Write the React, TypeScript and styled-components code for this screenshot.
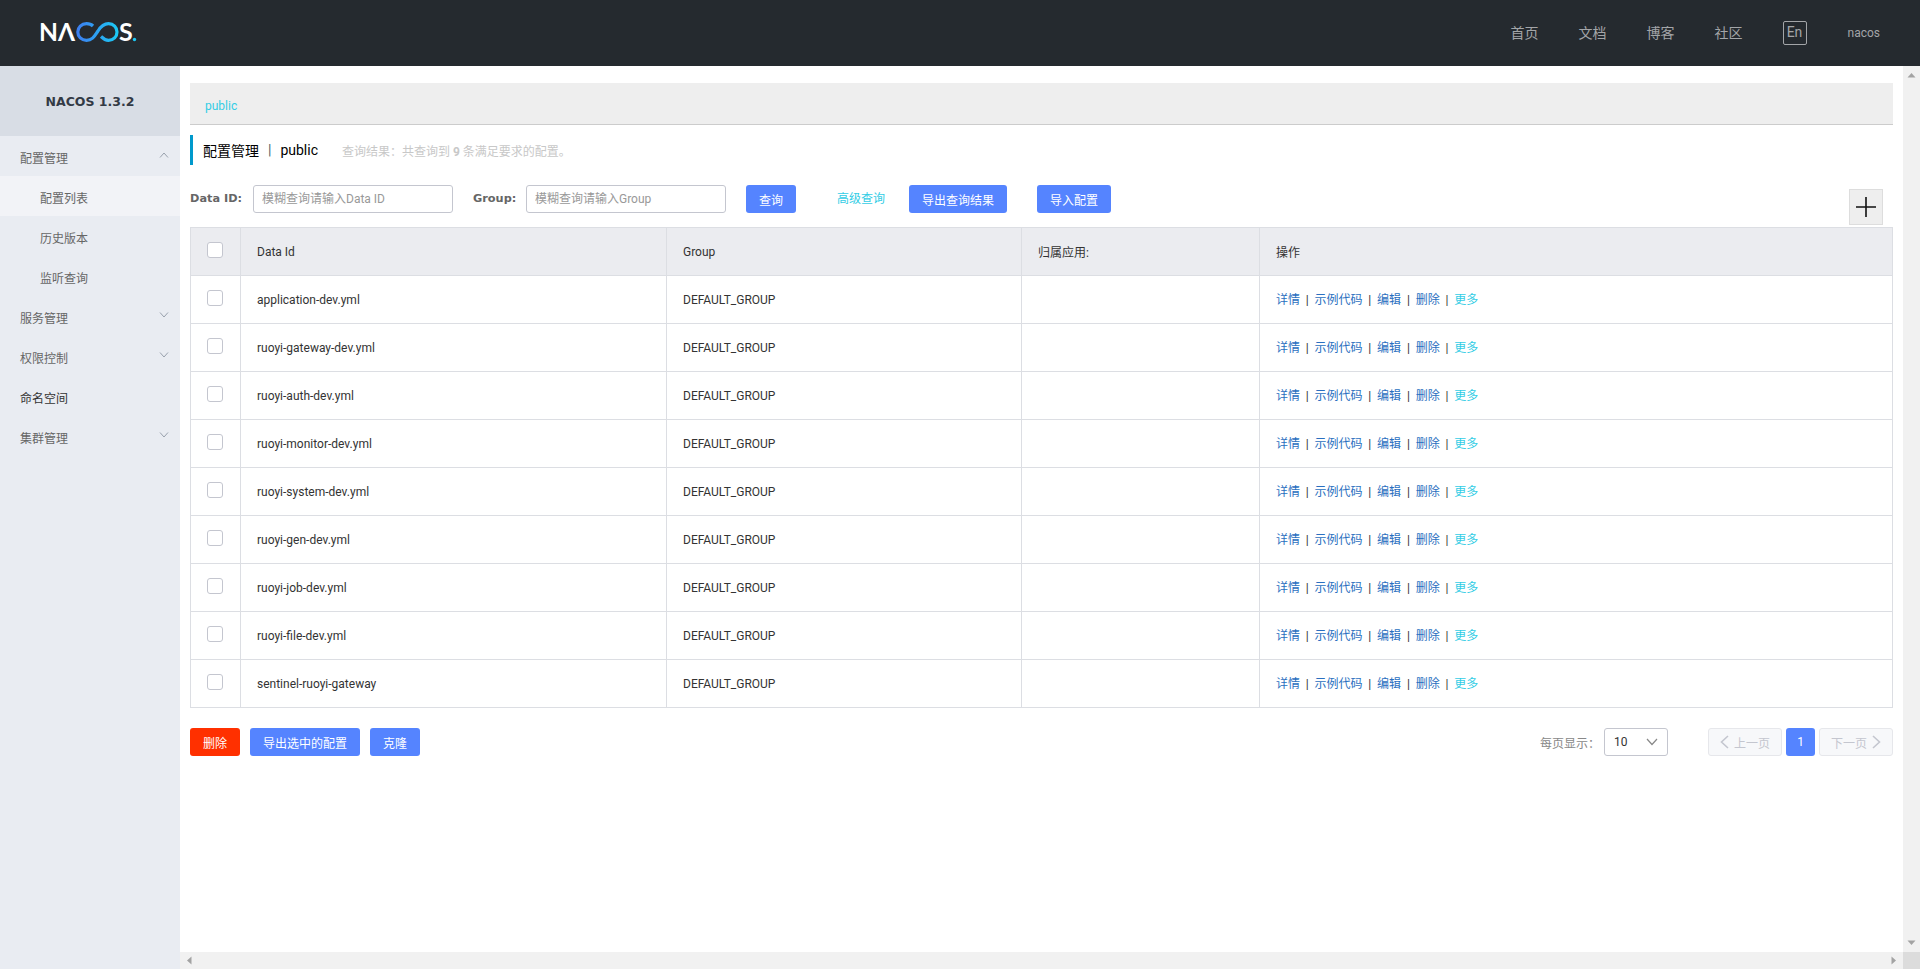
import React from 'react';
import styled, { createGlobalStyle } from 'styled-components';

const FONT = `Roboto, "Noto Sans CJK SC", sans-serif`;

const GlobalStyle = createGlobalStyle`
  html, body {
    margin: 0;
    height: 100%;
    overflow: hidden;
    background: #fff;
    font-family: ${FONT};
    font-size: 12px;
    color: #333;
  }
  * {
    box-sizing: border-box;
  }
`;

const Page = styled.div`
  width: 1920px;
  height: 969px;
  display: flex;
  flex-direction: column;
`;

const Header = styled.header`
  flex: 0 0 66px;
  background: #252a2f;
  display: flex;
  align-items: center;
  justify-content: space-between;
  padding: 0 40px 0 39px;
`;

const NavList = styled.nav`
  display: flex;
  align-items: center;
`;

const NavLink = styled.a`
  width: 68px;
  margin-top: -3px;
  font-size: 14px;
  color: #a3a5a8;
`;

const LangBox = styled.span`
  width: 24px;
  height: 24px;
  margin: -1px 41px 0 0;
  border: 1px solid #a3a5a8;
  border-radius: 2px;
  font-size: 14px;
  line-height: 20px;
  text-align: center;
  color: #a3a5a8;
`;

const UserName = styled.span`
  font-size: 12px;
  color: #a3a5a8;
`;

const Body = styled.div`
  flex: 1;
  display: flex;
  min-height: 0;
`;

const Sidebar = styled.aside`
  flex: 0 0 180px;
  background: #e9ecf2;
`;

const Version = styled.div`
  height: 70px;
  background: #d8dde5;
  display: flex;
  align-items: center;
  justify-content: center;
  font-family: "DejaVu Sans", sans-serif;
  font-weight: 700;
  font-size: 12.5px;
  color: #333a45;
`;

const MenuItem = styled.div<{ $sub?: boolean; $active?: boolean; $dark?: boolean }>`
  height: 40px;
  display: flex;
  align-items: center;
  justify-content: space-between;
  padding: 3px 10px 0 ${(p) => (p.$sub ? 40 : 20)}px;
  background: ${(p) => (p.$active ? '#f2f3f7' : 'transparent')};
  color: ${(p) => (p.$dark ? '#333' : '#666')};
`;

const Chevron = styled.svg`
  width: 10px;
  height: 6px;
  margin: -6px 1px 0 0;
`;

const MainColumn = styled.div`
  flex: 1;
  min-width: 0;
  display: flex;
  flex-direction: column;
`;

const MainRow = styled.div`
  flex: 1;
  min-height: 0;
  display: flex;
`;

const Content = styled.main`
  flex: 1;
  min-width: 0;
  padding: 17px 10px 0;
`;

const NamespaceBar = styled.div`
  height: 42px;
  background: #eee;
  border-bottom: 1px solid #ccc;
  padding: 15px 15px 0;
  line-height: 16px;
  color: #33cde5;
`;

const TitleBar = styled.div`
  height: 30px;
  margin-top: 10px;
  border-left: 3px solid #09c;
  padding-left: 10px;
  display: flex;
  align-items: center;
  color: #000;
  font-size: 14px;
`;

const TitleDivider = styled.span`
  margin: 0 9px;
  color: #466;
`;

const ResultNote = styled.span`
  margin-left: 24px;
  font-size: 12px;
  color: #c8c8c8;
`;

const SearchRow = styled.div`
  position: relative;
  height: 42px;
  margin-top: 20px;
  display: flex;
  align-items: flex-start;
`;

const FieldLabel = styled.label<{ $width: number; $left?: number }>`
  width: ${(p) => p.$width}px;
  margin-left: ${(p) => p.$left ?? 0}px;
  font-family: "DejaVu Sans", sans-serif;
  font-weight: 700;
  font-size: 11.3px;
  line-height: 28px;
  color: #666;
`;

const TextInput = styled.input`
  width: 200px;
  height: 28px;
  padding: 0 8px;
  border: 1px solid #c4c6cf;
  border-radius: 3px;
  outline: none;
  background: #fff;
  font-family: ${FONT};
  font-size: 12px;
  &::placeholder {
    color: #999;
  }
`;

const Button = styled.button<{ $width: number; $left?: number; $danger?: boolean }>`
  width: ${(p) => p.$width}px;
  height: 28px;
  margin-left: ${(p) => p.$left ?? 0}px;
  padding: 0;
  border: none;
  border-radius: 3px;
  background: ${(p) => (p.$danger ? '#ff3000' : '#5584ff')};
  color: #fff;
  font-family: ${FONT};
  font-size: 12px;
`;

const AdvancedLink = styled.a`
  margin-left: 41px;
  line-height: 28px;
  color: #33cde5;
`;

const AddButton = styled.button`
  position: absolute;
  top: 4px;
  right: 10px;
  width: 34px;
  height: 36px;
  padding: 0;
  display: flex;
  align-items: center;
  justify-content: center;
  border: 1px solid #ddd;
  background: #eee;
`;

const Table = styled.table`
  width: 1703px;
  table-layout: fixed;
  border-collapse: collapse;
  font-size: 12px;
  color: #333;
`;

const HeadCell = styled.th<{ $width?: number }>`
  width: ${(p) => (p.$width ? `${p.$width}px` : 'auto')};
  height: 48px;
  padding: 0 16px;
  border: 1px solid #dcdee3;
  background: #ebecf0;
  font-weight: 400;
  text-align: left;
`;

const Cell = styled.td`
  height: 48px;
  padding: 0 16px;
  border: 1px solid #dcdee3;
`;

const ActionCell = styled(Cell)`
  padding-bottom: 2px;
`;

const CheckBox = styled.span`
  display: block;
  width: 16px;
  height: 16px;
  margin-top: -3px;
  border: 1px solid #c4c6cf;
  border-radius: 3px;
  background: #fff;
`;

const ActionLink = styled.a<{ $more?: boolean }>`
  color: ${(p) => (p.$more ? '#33cde5' : '#2a6fc0')};
`;

const ActionDivider = styled.span`
  margin: 0 5.8px;
  color: #333;
`;

const Footer = styled.div`
  margin-top: 20px;
  display: flex;
  align-items: center;
`;

const PagerArea = styled.div`
  margin-left: auto;
  display: flex;
  align-items: center;
`;

const PageSizeLabel = styled.span`
  margin-right: 4px;
  color: #888;
`;

const PageSize = styled.div`
  width: 64px;
  height: 28px;
  margin-right: 40px;
  padding: 0 9px;
  display: flex;
  align-items: center;
  justify-content: space-between;
  border: 1px solid #c4c6cf;
  border-radius: 3px;
  color: #333;
`;

const PagerButton = styled.span`
  width: 74px;
  height: 28px;
  display: flex;
  align-items: center;
  justify-content: center;
  gap: 5px;
  border: 1px solid #e6e7eb;
  border-radius: 3px;
  background: #f7f8fa;
  color: #c4c6cf;
`;

const CurrentPage = styled.span`
  width: 29px;
  height: 28px;
  margin: 0 4px;
  display: flex;
  align-items: center;
  justify-content: center;
  border-radius: 3px;
  background: #5584ff;
  color: #fff;
`;

const ScrollTrack = styled.div<{ $vertical?: boolean }>`
  flex: 0 0 17px;
  display: flex;
  flex-direction: ${(p) => (p.$vertical ? 'column' : 'row')};
  align-items: center;
  justify-content: space-between;
  padding: ${(p) => (p.$vertical ? '5px 0' : '0 5px')};
  background: #f1f1f1;
`;

const HorizontalRow = styled.div`
  flex: 0 0 17px;
  display: flex;
`;

const ScrollBarFill = styled(ScrollTrack)`
  flex: 1;
`;

const ScrollCorner = styled.div`
  flex: 0 0 17px;
  background: #dcdcdc;
`;

const rows = [
  'application-dev.yml',
  'ruoyi-gateway-dev.yml',
  'ruoyi-auth-dev.yml',
  'ruoyi-monitor-dev.yml',
  'ruoyi-system-dev.yml',
  'ruoyi-gen-dev.yml',
  'ruoyi-job-dev.yml',
  'ruoyi-file-dev.yml',
  'sentinel-ruoyi-gateway',
];

const Logo = () => (
  <svg width="100" height="36" viewBox="0 0 100 36" role="img" aria-label="NACOS.">
    <defs>
      <linearGradient id="loop" x1="0" x2="1" y1="0" y2="0">
        <stop offset="0" stopColor="#3d7ff0" />
        <stop offset="1" stopColor="#1cc8f5" />
      </linearGradient>
    </defs>
    <text
      x="0"
      y="26"
      fontFamily="Lato, sans-serif"
      fontWeight="700"
      fontSize="25"
      fill="#fff"
      textLength="36"
      lengthAdjust="spacingAndGlyphs"
    >
      NΛ
    </text>
    <path
      d="M54 11 C52 9 50 8.7 47.5 8.7 C42.5 8.7 38.8 12.5 38.8 17 C38.8 21.8 42.5 25.3 47.5 25.3 C54 25.3 56 20 59 16 C61.5 12 64.5 8.7 69.5 8.7 C74.5 8.7 78 12.3 78 17 C78 21.7 74.5 25.3 69.5 25.3 C66.5 25.3 64 23.5 62 21.5"
      fill="none"
      stroke="url(#loop)"
      strokeWidth="3.2"
    />
    <text x="80" y="26" fontFamily="Lato, sans-serif" fontWeight="700" fontSize="25" fill="#fff">
      S
    </text>
    <circle cx="95.5" cy="24.5" r="1.7" fill="#1cc8f5" />
  </svg>
);

const ChevronIcon = ({ up }: { up?: boolean }) => (
  <Chevron viewBox="0 0 10 6">
    <path d={up ? 'M1 5.5 L5 1 L9 5.5' : 'M1 .5 L5 5 L9 .5'} fill="none" stroke="#98a0ac" />
  </Chevron>
);

const Triangle = ({ points }: { points: string }) => (
  <svg width="9" height="9" viewBox="0 0 9 9">
    <polygon points={points} fill="#a3a3a3" />
  </svg>
);

const App = () => {
  return (
    <Page>
      <GlobalStyle />
      <Header>
        <Logo />
        <NavList>
          <NavLink>首页</NavLink>
          <NavLink>文档</NavLink>
          <NavLink>博客</NavLink>
          <NavLink>社区</NavLink>
          <LangBox>En</LangBox>
          <UserName>nacos</UserName>
        </NavList>
      </Header>
      <Body>
        <Sidebar>
          <Version>NACOS 1.3.2</Version>
          <MenuItem>
            配置管理
            <ChevronIcon up />
          </MenuItem>
          <MenuItem $sub $active>
            配置列表
          </MenuItem>
          <MenuItem $sub>历史版本</MenuItem>
          <MenuItem $sub>监听查询</MenuItem>
          <MenuItem>
            服务管理
            <ChevronIcon />
          </MenuItem>
          <MenuItem>
            权限控制
            <ChevronIcon />
          </MenuItem>
          <MenuItem $dark>命名空间</MenuItem>
          <MenuItem>
            集群管理
            <ChevronIcon />
          </MenuItem>
        </Sidebar>
        <MainColumn>
          <MainRow>
            <Content>
              <NamespaceBar>public</NamespaceBar>
              <TitleBar>
                配置管理
                <TitleDivider>|</TitleDivider>
                public
                <ResultNote>
                  查询结果：共查询到 <b>9</b> 条满足要求的配置。
                </ResultNote>
              </TitleBar>
              <SearchRow>
                <FieldLabel $width={63}>Data ID:</FieldLabel>
                <TextInput placeholder="模糊查询请输入Data ID" />
                <FieldLabel $width={53} $left={20}>
                  Group:
                </FieldLabel>
                <TextInput placeholder="模糊查询请输入Group" />
                <Button $width={50} $left={20}>
                  查询
                </Button>
                <AdvancedLink>高级查询</AdvancedLink>
                <Button $width={98} $left={24}>
                  导出查询结果
                </Button>
                <Button $width={74} $left={30}>
                  导入配置
                </Button>
                <AddButton aria-label="add">
                  <svg width="22" height="22" viewBox="0 0 22 22">
                    <path d="M11 1 V21 M1 11 H21" stroke="#111" strokeWidth="1.6" />
                  </svg>
                </AddButton>
              </SearchRow>
              <Table>
                <thead>
                  <tr>
                    <HeadCell $width={50}>
                      <CheckBox />
                    </HeadCell>
                    <HeadCell $width={426}>Data Id</HeadCell>
                    <HeadCell $width={355}>Group</HeadCell>
                    <HeadCell $width={238}>归属应用:</HeadCell>
                    <HeadCell>操作</HeadCell>
                  </tr>
                </thead>
                <tbody>
                  {rows.map((name) => (
                    <tr key={name}>
                      <Cell>
                        <CheckBox />
                      </Cell>
                      <Cell>{name}</Cell>
                      <Cell>DEFAULT_GROUP</Cell>
                      <Cell />
                      <ActionCell>
                        <ActionLink>详情</ActionLink>
                        <ActionDivider>|</ActionDivider>
                        <ActionLink>示例代码</ActionLink>
                        <ActionDivider>|</ActionDivider>
                        <ActionLink>编辑</ActionLink>
                        <ActionDivider>|</ActionDivider>
                        <ActionLink>删除</ActionLink>
                        <ActionDivider>|</ActionDivider>
                        <ActionLink $more>更多</ActionLink>
                      </ActionCell>
                    </tr>
                  ))}
                </tbody>
              </Table>
              <Footer>
                <Button $width={50} $danger>
                  删除
                </Button>
                <Button $width={110} $left={10}>
                  导出选中的配置
                </Button>
                <Button $width={50} $left={10}>
                  克隆
                </Button>
                <PagerArea>
                  <PageSizeLabel>每页显示：</PageSizeLabel>
                  <PageSize>
                    10
                    <svg width="12" height="8" viewBox="0 0 12 8">
                      <path d="M1 1 L6 6.5 L11 1" fill="none" stroke="#888" strokeWidth="1.2" />
                    </svg>
                  </PageSize>
                  <PagerButton>
                    <svg width="9" height="14" viewBox="0 0 9 14">
                      <path d="M8 1 L1.5 7 L8 13" fill="none" stroke="#c4c6cf" strokeWidth="1.6" />
                    </svg>
                    上一页
                  </PagerButton>
                  <CurrentPage>1</CurrentPage>
                  <PagerButton>
                    下一页
                    <svg width="9" height="14" viewBox="0 0 9 14">
                      <path d="M1 1 L7.5 7 L1 13" fill="none" stroke="#c4c6cf" strokeWidth="1.6" />
                    </svg>
                  </PagerButton>
                </PagerArea>
              </Footer>
            </Content>
            <ScrollTrack $vertical>
              <Triangle points="0.5,6.5 4.5,2 8.5,6.5" />
              <Triangle points="0.5,2.5 4.5,7 8.5,2.5" />
            </ScrollTrack>
          </MainRow>
          <HorizontalRow>
            <ScrollBarFill>
              <Triangle points="6.5,0.5 2,4.5 6.5,8.5" />
              <Triangle points="2.5,0.5 7,4.5 2.5,8.5" />
            </ScrollBarFill>
            <ScrollCorner />
          </HorizontalRow>
        </MainColumn>
      </Body>
    </Page>
  );
};

export default App;
